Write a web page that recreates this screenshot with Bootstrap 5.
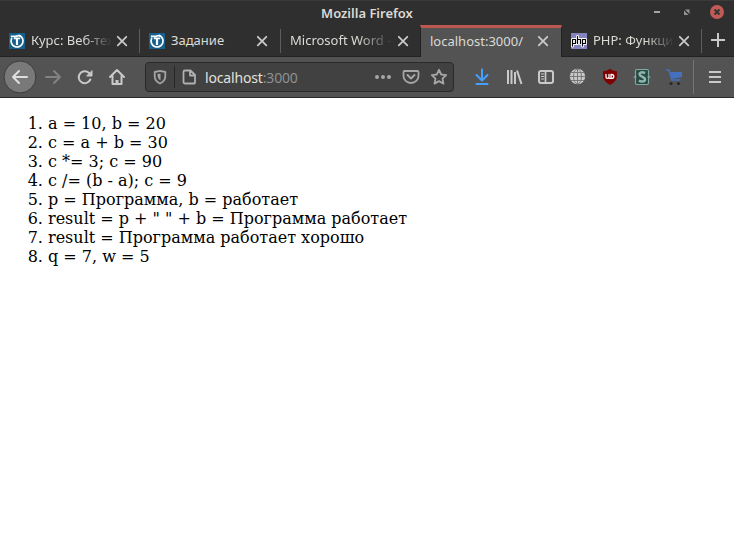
<!DOCTYPE html>
<html lang="ru">
<head>
<meta charset="utf-8">
<title>Mozilla Firefox</title>
<link href="https://cdn.jsdelivr.net/npm/bootstrap@5.3.0/dist/css/bootstrap.min.css" rel="stylesheet">
<style>
body{background:#fff;font-family:"Noto Sans","Open Sans",sans-serif;overflow:hidden;height:535px}
.titlebar{height:25px;background:#2f2f2f;border-top:1px solid #3a3a3a;color:#dcdad5;font-size:13px;font-weight:600;line-height:24px}
.win-controls{top:0;right:0}
.tabstrip{height:32px;background:#2f2f2f;border-bottom:1px solid #222}
.tab{width:139px;height:31px;padding-left:9px;font-size:13px;line-height:31px;color:#dcdad5;flex:none}
.tab .favicon{width:16px;height:16px;margin-right:6px;flex:none}
.tab .close-tab{width:16px;height:16px;margin-left:2px;flex:none}
.caption{width:81px;white-space:nowrap;flex:none}
.caption.wide{width:103px}
.fade-end{-webkit-mask-image:linear-gradient(90deg,#000 65%,transparent 100%);mask-image:linear-gradient(90deg,#000 65%,transparent 100%)}
.tab-second{width:140px}
.tab-active{width:142px;height:32px;background:#535353;border-top:3px solid #bc5752;border-left:1px solid #222;border-right:1px solid #222;line-height:26px;margin-bottom:-1px;padding-bottom:4px}
.tab-rule{width:1px;height:24px;background:#5d5d5d;flex:none}
.toolbar{height:41px;background:#535353;border-bottom:1px solid #2a2a2a;padding-left:4px}
.tool{width:32px;height:32px;flex:none;display:block;overflow:visible}
.tool-back{margin-right:1px}
.address{width:309px;height:30px;background:#414141;border:1px solid #292929;border-radius:4px;margin:0 12px;flex:none;font-size:14px;letter-spacing:-.16px;color:#e2e0dc}
.address .port{color:#8f8f8f}
.tool-rule{width:1px;height:34px;background:#757575;margin:0 6px 0 3px;flex:none}
.address-rule{width:1px;height:22px;background:#272727;flex:none}
.output{font-family:"DejaVu Serif",serif;font-size:16px;line-height:19px;color:#000;margin:16px 0 0;padding-left:48px}
svg{fill:none;stroke:#c9c9c9;stroke-width:2;stroke-linecap:round;stroke-linejoin:round}
</style>
<script src="https://cdn.jsdelivr.net/npm/bootstrap@5.3.0/dist/js/bootstrap.bundle.min.js"></script>
</head>
<body>
<svg class="d-none">
  <symbol id="close" viewBox="0 0 16 16"><path d="M3.8 3.800l8.500 8.500M12.300 3.800l-8.500 8.500" stroke-width="1.800"/></symbol>
  <symbol id="course" viewBox="0 0 16 16"><path d="M0 0h16v16H0z" fill="#15608c" stroke="none"/><path d="M2.600 5.500A6 6 0 1 0 10.500 2.500" stroke="#fff" stroke-width="1.700"/><path d="M1.800 3.400h5q3-1.400 5 0M4.800 5.400h6.400" stroke="#fff" stroke-width="1.700" stroke-linecap="butt"/><path d="M8 5v7" stroke="#fff" stroke-width="2.200" stroke-linecap="butt"/></symbol>
</svg>
<header>
  <div class="titlebar position-relative text-center">
    <span>Mozilla Firefox</span>
    <svg class="win-controls position-absolute" width="94" height="24" viewBox="640 1 94 24"><path d="M654 12h6" stroke="#a5a5a5" stroke-linecap="butt"/><path d="M685 9.500h4.500V14zM684 10.500V15h4.500z" fill="#929292" stroke="none"/><circle cx="717" cy="12" r="7" fill="#c25a56" stroke="none"/><path d="M714.500 9.500l5 5m0-5l-5 5" stroke="#343434" stroke-linecap="butt"/></svg>
  </div>
  <nav class="tabstrip d-flex align-items-center">
    <div class="tab d-flex align-items-center"><svg class="favicon"><use href="#course"/></svg><span class="caption fade-end">Курс: Веб-тех</span><svg class="close-tab"><use href="#close"/></svg></div>
    <i class="tab-rule"></i>
    <div class="tab tab-second d-flex align-items-center"><svg class="favicon"><use href="#course"/></svg><span class="caption">Задание</span><svg class="close-tab"><use href="#close"/></svg></div>
    <i class="tab-rule"></i>
    <div class="tab d-flex align-items-center"><span class="caption wide fade-end">Microsoft Word -</span><svg class="close-tab"><use href="#close"/></svg></div>
    <div class="tab tab-active d-flex align-items-center"><span class="caption wide">localhost:3000/</span><svg class="close-tab"><use href="#close"/></svg></div>
    <div class="tab d-flex align-items-center"><svg class="favicon" viewBox="0 0 16 16"><path d="M0 0h16v16H0z" fill="#8384bd" stroke="none"/><path d="M1.500 13V6.500h3v4h-3M6.500 3.500v7m0-4h3v4M11.500 13V6.500h3v4h-3" stroke="#fff" stroke-width="3"/><path d="M1.500 13V6.500h3v4h-3M6.500 3.500v7m0-4h3v4M11.500 13V6.500h3v4h-3" stroke="#000" stroke-width="1.200"/></svg><span class="caption fade-end">PHP: Функци</span><svg class="close-tab"><use href="#close"/></svg></div>
    <i class="tab-rule"></i>
    <svg width="32" height="31" viewBox="702 25 32 31"><path d="M711 40h14M718 33v14" stroke-linecap="butt"/></svg>
  </nav>
  <div class="toolbar d-flex align-items-center">
    <svg class="tool tool-back"><circle cx="16" cy="16" r="16" fill="#797979" stroke="#3b3b3b" stroke-width="1"/><path d="M23 16H9m6-6l-6 6 6 6" stroke="#dedede"/></svg>
    <svg class="tool"><path d="M9 16h14m-6-6l6 6-6 6" stroke="#828282"/></svg>
    <svg class="tool"><path d="M21.300 18.500A6 6 0 1 1 20 12l2 2"/><path d="M23 10v5h-5z" fill="#c9c9c9" stroke-width="1"/></svg>
    <svg class="tool"><path d="M9 16l7-7 7 7M11.500 15v8h9v-8"/><path d="M16 23v-4" stroke-width="3" stroke-linecap="butt"/></svg>
    <div class="address d-flex align-items-center">
      <svg width="28" height="28" viewBox="146 63 28 28"><path d="M160 70.800l5.300 1.200v4q0 5-5.300 7.500-5.300-2.500-5.300-7.500v-4z" stroke="#a3a3a3" stroke-width="1.800"/><path d="M160.500 73.500v7q-3-2-3-5.500v-1z" fill="#a3a3a3" stroke="none"/></svg>
      <i class="address-rule"></i>
      <svg width="30" height="28" viewBox="175 63 30 28"><path d="M185 70.500h5.500l4.500 4.500v7.500q0 1-1 1h-9q-1.500 0-1.500-1.500v-10q0-1.500 1.500-1.500zm5 .5v4.500h5" stroke="#b0b0b0" stroke-width="1.800"/></svg>
      <span>localhost<span class="port">:3000</span></span>
      <svg class="ms-auto flex-shrink-0" width="86" height="28" viewBox="367 63 86 28"><g stroke="#a6a6a6"><path d="M377 77h0M383 77h0M389 77h0" stroke-width="4"/><path d="M404.500 71h13q1 0 1 1v4a7.500 7 0 0 1-15 0v-4q0-1 1-1z" stroke-width="1.800"/><path d="M407.500 75l3.500 3.500 3.500-3.500"/><path d="M439 69.800l2.200 4.700 5 .6-3.700 3.500 1 5-4.500-2.500-4.500 2.500 1-5-3.700-3.500 5-.6z" stroke-width="1.800"/></g></svg>
    </div>
    <svg class="tool"><path d="M16 8.500v10.500M10.500 14l5.500 5.500 5.500-5.500M10.500 23h11" stroke="#45a1ff"/></svg>
    <svg class="tool"><path d="M10 9v14M13.500 9v14M17 11v12M19 9.500l4.500 13.500" stroke-linecap="butt"/></svg>
    <svg class="tool"><rect x="9" y="10" width="14" height="12" rx="2"/><path d="M15.500 10v12" stroke-width="1.700"/><path d="M11 13h3m-3 2.500h3M11 18h3" stroke-width="1.100" stroke-linecap="butt"/></svg>
    <svg class="tool"><circle cx="15.500" cy="15.500" r="7.700" fill="#c9c9c9" stroke="none"/><path d="M8 15.500h15M9 11.500h13M9 19.500h13M15.500 8v15" stroke="#707070" stroke-width=".9"/><ellipse cx="15.500" cy="15.500" rx="4" ry="7.500" stroke="#707070" stroke-width=".9"/></svg>
    <svg class="tool"><path d="M16 8.500q3 2 6.500 2v5q0 4.500-6.500 8-6.500-3.500-6.500-8v-5q3.500 0 6.500-2z" fill="#800000" stroke="#800000" stroke-width=".8"/><path d="M12 13.500v2.500q0 1.300 1.500 1.300t1.500-1.300v-2.500M15 17.300h2.500q2.300 0 2.300-1.900t-2.300-1.900h-.5v3" stroke="#fff" stroke-width="1.300"/></svg>
    <svg class="tool"><rect x="9.500" y="8.500" width="13" height="15" rx="1.500" fill="#294943" stroke="#80aaa1" stroke-width="1.200"/><path d="M8.300 16h1.500M22.200 16h1.500" stroke="#80aaa1" stroke-width="1.600"/><path d="M19.200 12q-5.500-1.700-5.700 1.200c0 2.500 5.500 2.500 5.500 5.300 0 2.700-4.200 2.200-6.200 1.200" stroke="#8fb5ad" stroke-width="2.500" stroke-linecap="butt"/></svg>
    <svg class="tool"><path d="M8.500 9h2.500l3 10h8" stroke="#4470bd" stroke-width="1.500"/><path d="M11.500 11h12.500v5l-10.500 2z" fill="#4470bd" stroke="none"/><circle cx="13" cy="22.500" r="1.600" fill="#292929" stroke="none"/><circle cx="20.500" cy="22.500" r="1.600" fill="#292929" stroke="none"/></svg>
    <i class="tool-rule"></i>
    <svg class="tool"><path d="M9 11h12M9 16h12M9 21h12" stroke-linecap="butt"/></svg>
  </div>
</header>
<main>
  <ol class="output">
    <li>a = 10, b = 20</li>
    <li>c = a + b = 30</li>
    <li>c *= 3; c = 90</li>
    <li>c /= (b - a); c = 9</li>
    <li>p = Программа, b = работает</li>
    <li>result = p + " " + b = Программа работает</li>
    <li>result = Программа работает хорошо</li>
    <li>q = 7, w = 5</li>
  </ol>
</main>
</body>
</html>
